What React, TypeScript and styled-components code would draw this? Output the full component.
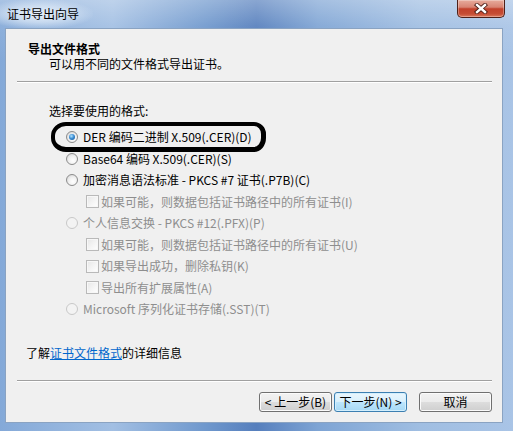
import React from "react";
import styled, { createGlobalStyle } from "styled-components";

const GlobalStyle = createGlobalStyle`
  html, body {
    margin: 0;
    padding: 0;
    width: 513px;
    height: 431px;
    overflow: hidden;
  }
  body {
    font-family: "Noto Sans CJK SC", "Noto Sans", sans-serif;
    font-size: 12px;
    color: #000;
  }
`;

const Window = styled.div`
  width: 513px;
  height: 431px;
  box-sizing: border-box;
  display: flex;
  flex-direction: column;
  background:
    linear-gradient(180deg, rgba(255, 255, 255, 0.3) 0px, rgba(255, 255, 255, 0.08) 26px, rgba(255, 255, 255, 0) 60px),
    linear-gradient(90deg, #84a9d8 0%, #a2bfe3 22%, #6f98cd 40%, #567fbd 50%, #7ea4d4 62%, #a0bee2 82%, #a9c4e6 100%);
`;

const TitleBar = styled.div`
  height: 28px;
  flex: none;
  display: flex;
  align-items: flex-start;
  justify-content: space-between;
`;

const Caption = styled.div`
  height: 28px;
  display: flex;
  align-items: center;
  padding: 0 14px 0 7px;
  background: radial-gradient(ellipse 60% 55% at 42% 50%, rgba(240, 246, 252, 0.9) 0%, rgba(225, 236, 248, 0.6) 55%, rgba(225, 236, 248, 0) 100%);
  line-height: 14px;
`;

const CloseButton = styled.div`
  width: 48px;
  height: 18px;
  margin-right: 8px;
  box-sizing: border-box;
  border: 1px solid #4e2019;
  border-top: none;
  border-radius: 0 0 5px 5px;
  background: linear-gradient(180deg, #e7ab9c 0%, #d88473 42%, #c2412b 52%, #c54d35 82%, #dc7a5e 100%);
  box-shadow: inset 0 0 0 1px rgba(255, 255, 255, 0.3);
  display: flex;
  align-items: center;
  justify-content: center;
`;

const Client = styled.div`
  flex: 1;
  margin: 0 10px 8px 5px;
  border: 1px solid #8aa3c2;
  background: #f0f0f0;
  display: flex;
  flex-direction: column;
  position: relative;
`;

const Header = styled.div`
  padding: 12px 0 10px 22px;
  line-height: 15px;
`;

const HeaderTitle = styled.div`
  font-weight: bold;
`;

const HeaderSub = styled.div`
  padding-left: 21px;
`;

const Rule = styled.div`
  margin: 0 10px 0 11px;
  border-top: 1px solid #a0a0a0;
  border-bottom: 1px solid #ffffff;
`;

const Body = styled.div`
  padding: 21px 0 0 43px;
  line-height: 14px;
`;

const OptionList = styled.div`
  position: relative;
  margin-top: 8.25px;
`;

const Row = styled.div<{ $indent: number; $disabled?: boolean }>`
  height: 21.5px;
  display: flex;
  align-items: center;
  padding-left: ${(p) => p.$indent}px;
  color: ${(p) => (p.$disabled ? "#8e8e8e" : "#000")};
  white-space: nowrap;
`;

const Radio = styled.span<{ $checked?: boolean; $disabled?: boolean }>`
  width: 12px;
  height: 12px;
  flex: none;
  box-sizing: border-box;
  margin-right: 5px;
  border-radius: 50%;
  border: 1px solid ${(p) => (p.$disabled ? "#c8c8c8" : "#8b8b8b")};
  background: ${(p) =>
    p.$disabled
      ? "#f3f3f3"
      : "radial-gradient(circle at 60% 65%, #ffffff 0%, #f1f1f1 45%, #cfcfcf 100%)"};
  display: flex;
  align-items: center;
  justify-content: center;

  &::after {
    content: "";
    display: ${(p) => (p.$checked ? "block" : "none")};
    width: 6px;
    height: 6px;
    border-radius: 50%;
    background: radial-gradient(circle at 40% 35%, #b3e4ff 0%, #3e8fd4 45%, #0d4a8c 100%);
  }
`;

const Check = styled.span<{ $disabled?: boolean }>`
  width: 13px;
  height: 13px;
  flex: none;
  box-sizing: border-box;
  margin-right: 2px;
  border: 1px solid ${(p) => (p.$disabled ? "#b9b9b9" : "#8e8f8f")};
  background: linear-gradient(135deg, #e6e6e6 0%, #f6f6f6 60%, #ffffff 100%);
  box-shadow: inset 0 0 0 1px #f7f7f7;
`;

const Annotation = styled.div`
  position: absolute;
  left: 2px;
  top: -4.5px;
  width: 215px;
  height: 30px;
  box-sizing: border-box;
  border-style: solid;
  border-color: #000;
  border-width: 4px 5px 5px 4px;
  border-radius: 15px 12px 12px 15px / 14px 12px 14px 14px;
  pointer-events: none;
`;

const InfoLine = styled.div`
  margin-top: 26.25px;
  padding-left: 20px;
  line-height: 14px;
`;

const Link = styled.a`
  color: #0066cc;
  text-decoration: underline;
  cursor: pointer;
`;

const FooterRule = styled(Rule)`
  margin-top: 20px;
`;

const ButtonRow = styled.div`
  display: flex;
  justify-content: flex-end;
  gap: 2px;
  padding: 10px 10px 0 0;
`;

const Button = styled.div<{ $primary?: boolean; $apart?: boolean }>`
  width: 73px;
  height: 20px;
  box-sizing: border-box;
  margin-left: ${(p) => (p.$apart ? "10px" : "0")};
  border: 1px solid ${(p) => (p.$primary ? "#3c7fb1" : "#707070")};
  border-radius: 3px;
  background: ${(p) =>
    p.$primary
      ? "linear-gradient(180deg, #eaf6fd 0%, #d9f0fc 50%, #bee6fd 50%, #a7d9f5 100%)"
      : "linear-gradient(180deg, #f2f2f2 0%, #ebebeb 50%, #dddddd 50%, #cfcfcf 100%)"};
  box-shadow: inset 0 0 0 1px ${(p) => (p.$primary ? "#d3effd" : "#fbfbfb")};
  display: flex;
  align-items: center;
  justify-content: center;
  line-height: 14px;
  white-space: nowrap;
`;

type Option = {
  kind: "radio" | "check";
  label: string;
  checked?: boolean;
  disabled?: boolean;
};

const options: Option[] = [
  { kind: "radio", label: "DER 编码二进制 X.509(.CER)(D)", checked: true },
  { kind: "radio", label: "Base64 编码 X.509(.CER)(S)" },
  { kind: "radio", label: "加密消息语法标准 - PKCS #7 证书(.P7B)(C)" },
  { kind: "check", label: "如果可能，则数据包括证书路径中的所有证书(I)", disabled: true },
  { kind: "radio", label: "个人信息交换 - PKCS #12(.PFX)(P)", disabled: true },
  { kind: "check", label: "如果可能，则数据包括证书路径中的所有证书(U)", disabled: true },
  { kind: "check", label: "如果导出成功，删除私钥(K)", disabled: true },
  { kind: "check", label: "导出所有扩展属性(A)", disabled: true },
  { kind: "radio", label: "Microsoft 序列化证书存储(.SST)(T)", disabled: true },
];

const CloseIcon = () => (
  <svg width="14" height="11" viewBox="0 0 14 11">
    <path d="M3 2 L11 9 M11 2 L3 9" stroke="#4a1c15" strokeWidth="4.2" strokeLinecap="square" />
    <path d="M3 2 L11 9 M11 2 L3 9" stroke="#ffffff" strokeWidth="2.4" strokeLinecap="square" />
  </svg>
);

const App: React.FC = () => {
  return (
    <>
      <GlobalStyle />
      <Window>
        <TitleBar>
          <Caption>证书导出向导</Caption>
          <CloseButton>
            <CloseIcon />
          </CloseButton>
        </TitleBar>
        <Client>
          <Header>
            <HeaderTitle>导出文件格式</HeaderTitle>
            <HeaderSub>可以用不同的文件格式导出证书。</HeaderSub>
          </Header>
          <Rule />
          <Body>
            <div>选择要使用的格式:</div>
            <OptionList>
              {options.map((o) => (
                <Row key={o.label} $indent={o.kind === "radio" ? 17 : 37} $disabled={o.disabled}>
                  {o.kind === "radio" ? (
                    <Radio $checked={o.checked} $disabled={o.disabled} />
                  ) : (
                    <Check $disabled={o.disabled} />
                  )}
                  {o.label}
                </Row>
              ))}
              <Annotation />
            </OptionList>
          </Body>
          <InfoLine>
            了解<Link>证书文件格式</Link>的详细信息
          </InfoLine>
          <FooterRule />
          <ButtonRow>
            <Button>&lt; 上一步(B)</Button>
            <Button $primary>下一步(N) &gt;</Button>
            <Button $apart>取消</Button>
          </ButtonRow>
        </Client>
      </Window>
    </>
  );
};

export default App;
